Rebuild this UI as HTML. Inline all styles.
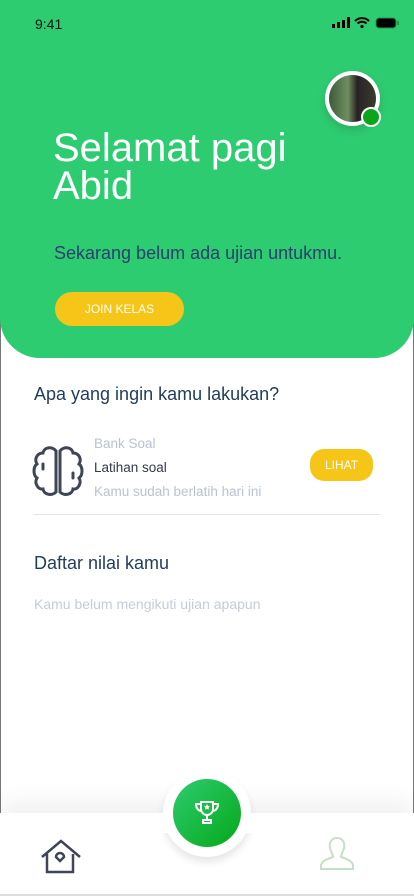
<!DOCTYPE html>
<html><head><meta charset="utf-8"><style>
*{margin:0;padding:0;box-sizing:border-box}
body{width:414px;height:896px;overflow:hidden;background:#fff;font-family:"Liberation Sans",sans-serif;position:relative}
.frame{position:absolute;left:0;top:300px;width:414px;height:514px;border-left:1px solid #777;border-right:1px solid #777}
.hdr{position:absolute;left:0;top:0;width:414px;height:358px;background:#2ECC71;border-radius:0 0 40px 40px}
.t{position:absolute;white-space:nowrap}
</style></head><body>
<div class="frame"></div>
<div class="hdr"></div>
<div class="t" style="left:35px;top:16px;font-size:14px;color:#111">9:41</div>
<svg style="position:absolute;left:332px;top:17px" width="68" height="12">
<rect x="0" y="7" width="3" height="4" fill="#000"/><rect x="5" y="5" width="3" height="6" fill="#000"/><rect x="10" y="3" width="3" height="8" fill="#000"/><rect x="15" y="0" width="3" height="11" fill="#000"/>
<path d="M23 4a10 10 0 0 1 14 0M25.5 6.5a6.5 6.5 0 0 1 9 0" stroke="#000" stroke-width="2" fill="none"/><circle cx="30" cy="9.5" r="1.6" fill="#000"/>
<rect x="44" y="1" width="20" height="10" rx="3" fill="#000" stroke="#1a9a50" stroke-width="1"/><rect x="65" y="4" width="2" height="4" fill="#1a9a50"/>
</svg>
<div style="position:absolute;left:325px;top:71px;width:55px;height:55px;border-radius:50%;background:#fff;box-shadow:0 4px 10px rgba(0,0,0,.15)"></div>
<div style="position:absolute;left:329px;top:75px;width:47px;height:47px;border-radius:50%;background:linear-gradient(90deg,#3e5a3a 0%,#6f8f60 40%,#2a2226 60%,#3a3c2e 100%)"></div>
<div style="position:absolute;left:361px;top:107px;width:20px;height:20px;border-radius:50%;background:#0aa51a;border:2px solid #fff"></div>
<div class="t" style="left:53px;top:129px;font-size:40px;color:#fff;line-height:38px">Selamat pagi<br>Abid</div>
<div class="t" style="left:54px;top:243px;font-size:18px;color:#2c3f6f">Sekarang belum ada ujian untukmu.</div>
<div style="position:absolute;left:55px;top:292px;width:129px;height:34px;border-radius:17px;background:#F5C518;color:#fff;font-size:12px;text-align:center;line-height:34px">JOIN KELAS</div>
<div class="t" style="left:34px;top:384px;font-size:18px;color:#233d5e">Apa yang ingin kamu lakukan?</div>
<svg style="position:absolute;left:32px;top:445px" width="52" height="52" viewBox="0 0 52 52" fill="none" stroke="#3d4556" stroke-width="3" stroke-linecap="round">
<path d="M24 6C20 1 12 2 11 8C5 8 2 14 5 19C1 22 1 30 5 33C2 38 6 45 11 44C12 50 20 51 24 47ZM24 6V47"/>
<path d="M28 6C32 1 40 2 41 8C47 8 50 14 47 19C51 22 51 30 47 33C50 38 46 45 41 44C40 50 32 51 28 47ZM28 6V47"/>
<path d="M11 19v5M41 33v-5"/>
</svg>
<div class="t" style="left:94px;top:436px;font-size:13.5px;color:#b8c3d2">Bank Soal</div>
<div class="t" style="left:94px;top:460px;font-size:13.5px;color:#333a48">Latihan soal</div>
<div class="t" style="left:94px;top:484px;font-size:13.5px;color:#b8c3d2">Kamu sudah berlatih hari ini</div>
<div style="position:absolute;left:310px;top:449px;width:63px;height:32px;border-radius:14px;background:#F5C518;color:#fff;font-size:12px;text-align:center;line-height:32px">LIHAT</div>
<div style="position:absolute;left:34px;top:514px;width:346px;height:1px;background:#dfeadf"></div>
<div class="t" style="left:34px;top:553px;font-size:18px;color:#233d5e">Daftar nilai kamu</div>
<div class="t" style="left:34px;top:596px;font-size:14px;color:#c3ccd8">Kamu belum mengikuti ujian apapun</div>
<div style="position:absolute;left:0;top:813px;width:414px;height:83px;background:#fff;box-shadow:0 -12px 22px rgba(0,0,0,.06);border-bottom:2px solid #ddd"></div>
<div style="position:absolute;left:163px;top:769px;width:88px;height:88px;border-radius:50%;background:#fff;box-shadow:0 5px 8px rgba(0,0,0,.10)"></div>
<div style="position:absolute;left:150px;top:813px;width:114px;height:20px;background:#fff"></div>
<div style="position:absolute;left:173px;top:779px;width:68px;height:68px;border-radius:50%;background:linear-gradient(135deg,#2ECC71,#05a818)"></div>
<svg style="position:absolute;left:193px;top:799px" width="28" height="28" viewBox="0 0 28 28" fill="none" stroke="#fff" stroke-width="2">
<path d="M8 3h12v7a6 6 0 0 1-12 0zM8 5H3c0 5 3 7 6 7M20 5h5c0 5-3 7-6 7M14 16v5M10 24h8v-3h-8z"/>
<path d="M14 5l1 2 2 .3-1.5 1.4.4 2L14 9.8l-1.9 1 .4-2L11 7.3 13 7z" fill="#fff" stroke="none"/>
</svg>
<svg style="position:absolute;left:40px;top:838px" width="42" height="38" viewBox="0 0 42 38" fill="none" stroke="#3d4556" stroke-width="2.5">
<path d="M2 19L21 3 40 19M7 16v18h26V16"/><path d="M20 23l-4-4a4 4 0 1 1 8 0z"/>
</svg>
<svg style="position:absolute;left:319px;top:836px" width="36" height="36" viewBox="0 0 36 36" fill="none" stroke="#c7dfc7" stroke-width="2">
<path d="M18 2c-6 0-8 5-7 10 1 4 3 7 3 9-6 2-11 4-12 8v4h32v-4c-1-4-6-6-12-8 0-2 2-5 3-9 1-5-1-10-7-10z"/>
</svg>
</body></html>
